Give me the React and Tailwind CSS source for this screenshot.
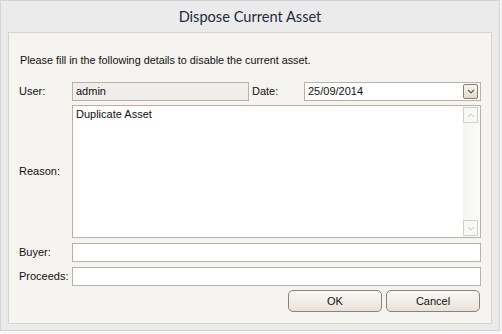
function Chevron({ dir = "down", color = "#4a3f36", w = 9, h = 6, sw = 1.4 }) {
  return (
    <svg width={w} height={h} viewBox="0 0 9 6">
      <path
        d={dir === "down" ? "M1 1.2 L4.5 4.6 L8 1.2" : "M1 4.8 L4.5 1.4 L8 4.8"}
        stroke={color}
        strokeWidth={sw}
        fill="none"
      />
    </svg>
  );
}

function Field({ children, className = "" }) {
  return (
    <div
      className={
        "h-[19px] border border-[#bcb1a6] bg-white flex items-center " + className
      }
    >
      {children}
    </div>
  );
}

export default function App() {
  return (
    <div className="w-[502px] h-[334px] bg-[#f7f7f7] font-['Liberation_Sans',Arial,sans-serif] text-[11px] text-[#111] leading-[13px]">
      <div className="w-[500px] h-[331px] border border-[#d3d3d3] bg-[#ebebeb] flex flex-col">
        <div className="h-[31px] flex items-center justify-center font-['Lato',sans-serif] text-[14.6px] text-[#1c2b40]">
          Dispose Current Asset
        </div>
        <div className="mx-[7px] h-[292px] border border-[#dbd3c6] bg-[#f5f4f0] pl-[10px] pr-[10px] pt-[21px] flex flex-col">
          <p className="h-[13px] pl-px text-[10.8px]">Please fill in the following details to disable the current asset.</p>

          <div className="mt-[15px] flex items-center h-[19px]">
            <span className="w-[53px]">User:</span>
            <Field className="w-[177px] !bg-[#f0eeea] pl-[3px]">admin</Field>
            <span className="w-[55px] pl-[3px]">Date:</span>
            <Field className="w-[177px] pl-[3px] pr-[2px] justify-between">
              <span>25/09/2014</span>
              <div className="w-[15px] h-[15px] rounded-[2px] border border-[#8a7c6f] bg-linear-to-b from-[#f7f4ef] to-[#e2dacd] flex items-center justify-center">
                <Chevron dir="down" color="#5a4a3e" w={8} h={5} sw={1.3} />
              </div>
            </Field>
          </div>

          <div className="mt-[4px] flex items-center h-[133px]">
            <span className="w-[53px]">Reason:</span>
            <div className="flex-1 h-[133px] border border-[#bcb1a6] bg-white flex">
              <div className="flex-1 pl-[3px] pt-[2px]">Duplicate Asset</div>
              <div className="w-[17px] h-full bg-linear-to-r from-[#f4f4f2] to-[#fbfbfa] flex flex-col justify-between py-[1px] pr-[2px]">
                <div className="w-[15px] h-[16px] border border-[#d3cfc9] bg-[#f7f7f5] flex items-center justify-center">
                  <Chevron dir="up" color="#c4c0ba" w={8} h={5} sw={1.2} />
                </div>
                <div className="w-[15px] h-[16px] border border-[#d3cfc9] bg-[#f7f7f5] flex items-center justify-center">
                  <Chevron dir="down" color="#c4c0ba" w={8} h={5} sw={1.2} />
                </div>
              </div>
            </div>
          </div>

          <div className="mt-[5px] flex items-center h-[19px]">
            <span className="w-[53px]">Buyer:</span>
            <Field className="flex-1" />
          </div>

          <div className="mt-[5px] flex items-center h-[19px]">
            <span className="w-[53px]">Proceeds:</span>
            <Field className="flex-1" />
          </div>

          <div className="mt-[4px] flex justify-end gap-[4px] pr-px">
            <button className="w-[94px] h-[22px] rounded-[5px] border border-[#8e8175] bg-linear-to-b from-[#fbfaf8] to-[#e8e2d8] text-[11px] text-[#111]">
              OK
            </button>
            <button className="w-[94px] h-[22px] rounded-[5px] border border-[#8e8175] bg-linear-to-b from-[#fbfaf8] to-[#e8e2d8] text-[11px] text-[#111]">
              Cancel
            </button>
          </div>
        </div>
      </div>
    </div>
  );
}
